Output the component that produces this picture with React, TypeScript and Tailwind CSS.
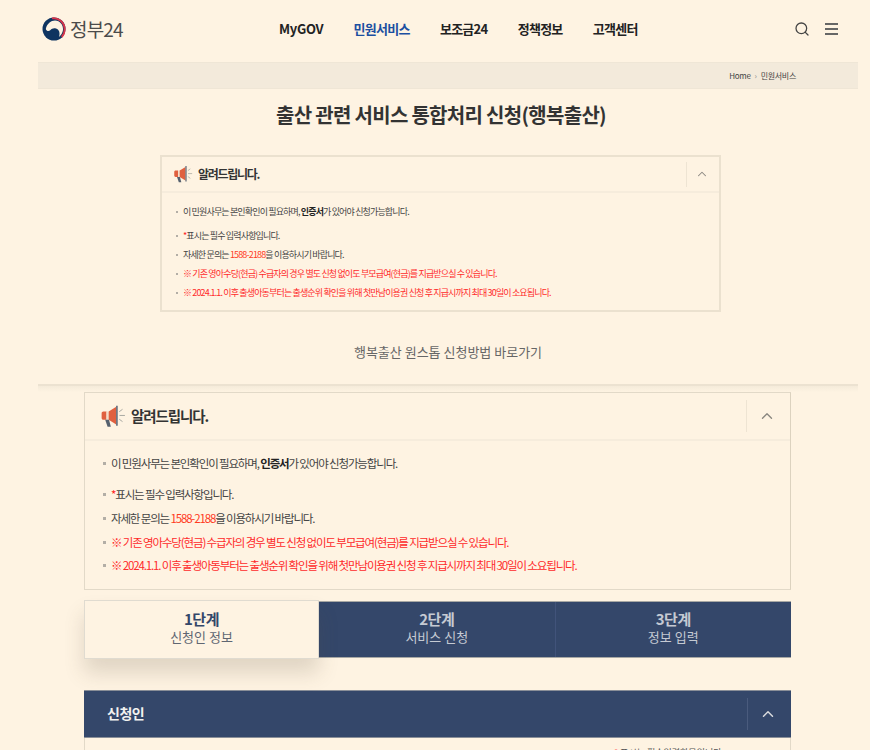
import { ChevronUp, Search } from "lucide-react";

function Megaphone({ size }: { size: number }) {
  return (
    <svg width={size} height={size} viewBox="0 0 24 24" className="shrink-0">
      <path d="M1.500 9.500c0-1 .7-1.700 1.600-1.700H6v7.700H3.100c-.9 0-1.600-.7-1.600-1.700z" fill="#e0603f" />
      <path d="M6 7.800h2v7.700H6z" fill="#f3ddc8" />
      <path d="M8 7.800l7-4.300v16.300l-7-4.300z" fill="#e0603f" />
      <path d="M14.800 2.500h1.600v18.500h-1.600z" fill="#6b7480" />
      <path d="M4.800 15.500h3.500l1.700 6.500H7z" fill="#55606e" />
      <path d="M18 11.500h5M17.800 8l3-2.200M17.800 15l3 2.200" stroke="#a8a8a0" strokeWidth="0.9" fill="none" />
    </svg>
  );
}

function Logo() {
  return (
    <svg width="24" height="24" viewBox="0 0 24 24">
      <circle cx="12" cy="12" r="11.500" fill="#0f3460" />
      <path d="M3.800 12C5 6.500 9 3.500 13 3.500c5 0 8.500 4.500 8 9.500-.4 3-2 5.200-4 7 1.200-3.500.5-7.500-3-8.500-2.500-.8-4.300.2-5.500 1.500-1.500 1.500-3.800 1.500-4.700-1z" fill="#fef3e2" />
      <path d="M10 1.400c6-1 12 3.500 12.600 10.200.3 3.200-.8 6.200-2.800 8.400" stroke="#d8344a" strokeWidth="1.900" fill="none" />
    </svg>
  );
}

type NoticeProps = {
  large?: boolean;
};

function Notice({ large }: NoticeProps) {
  const rowClass = large
    ? "flex items-center gap-[5px] h-[23.700px]"
    : "flex items-center gap-[5px] h-[19px]";
  const dot = large ? "w-[3px] h-[3px] bg-[#b3aea6] shrink-0" : "w-[2px] h-[2px] bg-[#b3aea6] shrink-0";
  return (
    <section className={large ? "border border-[#e2d9c8] border-r-[#dcd2bf]" : "border-2 border-[#ebe1cf]"}>
      <div className={large ? "flex items-center h-[48px] pl-[15px] pb-[1px] border-b-2 border-[#f6ecdc]" : "flex items-center h-[36px] pl-[11px] border-b-2 border-[#f6ecdc]"}>
        <Megaphone size={large ? 26 : 20} />
        <h3 className={large ? "ml-[5px] text-[14.500px] font-bold tracking-[-1.1px] text-[#333]" : "ml-[5px] text-[12px] font-bold tracking-[-1.3px] text-[#333]"}>
          알려드립니다.
        </h3>
        <div className={large ? "ml-auto h-[32px] w-[44px] pr-[4px] border-l border-[#eee4d3] flex items-center justify-center" : "ml-auto h-[25px] w-[33px] pr-[2px] border-l border-[#eee4d3] flex items-center justify-center"}>
          <ChevronUp size={large ? 18 : 14} strokeWidth={1.8} className="text-[#8a8780]" />
        </div>
      </div>
      <div className={large ? "pl-[18px] pt-[11px] pb-[11px] text-[11.500px] tracking-[-1.15px] text-[#444]" : "pl-[14px] pt-[9px] pb-[8px] text-[9px] tracking-[-0.85px] text-[#444]"}>
        <p className={large ? rowClass + " mb-[7.300px]" : rowClass + " mb-[5px]"}>
          <i className={dot} />
          <span>
            이 민원사무는 본인확인이 필요하며, <b className="font-bold text-[#222]">인증서</b>가 있어야 신청가능합니다.
          </span>
        </p>
        <p className={rowClass}>
          <i className={dot} />
          <span>
            <span className="text-[#ff2020]">*</span>표시는 필수 입력사항입니다.
          </span>
        </p>
        <p className={rowClass}>
          <i className={dot} />
          <span>
            자세한 문의는 <span className="text-[#ff3b1f]">1588-2188</span>을 이용하시기 바랍니다.
          </span>
        </p>
        <p className={rowClass + " text-[#ff2a2a]"}>
          <i className={dot} />
          <span>※ 기존 영아수당(현금) 수급자의 경우 별도 신청 없이도 부모급여(현금)를 지급받으실 수 있습니다.</span>
        </p>
        <p className={rowClass + " text-[#ff2a2a]"}>
          <i className={dot} />
          <span>※ 2024.1.1. 이후 출생아동부터는 출생순위 확인을 위해 첫만남이용권 신청 후 지급시까지 최대 30일이 소요됩니다.</span>
        </p>
      </div>
    </section>
  );
}

function Step({ no, label, active }: { no: string; label: string; active?: boolean }) {
  if (active) {
    return (
      <div className="relative z-10 w-[235px] h-[59px] -mt-[2px] pb-[4px] bg-[#fef3e2] border border-[#e0dbd0] flex flex-col items-center justify-center shadow-[0_14px_20px_rgba(90,80,60,0.18)]">
        <strong className="text-[15px] leading-[20px] font-bold tracking-[-0.5px] text-[#34476a]">{no}</strong>
        <span className="text-[13px] leading-[16px] text-[#5f6672]">{label}</span>
      </div>
    );
  }
  return (
    <div className="flex-1 h-[56px] pb-[5px] flex flex-col items-center justify-center text-[#c5cad3]">
      <strong className="text-[15px] leading-[20px] font-bold tracking-[-0.5px]">{no}</strong>
      <span className="text-[13px] leading-[16px]">{label}</span>
    </div>
  );
}

export default function App() {
  return (
    <div className="w-[870px] h-[750px] overflow-hidden bg-[#fef3e2] font-['Noto_Sans_CJK_KR','Noto_Sans',sans-serif]">
      <header className="h-[62px] pb-[4px] flex items-center pl-[42px] pr-[32px]">
        <a className="flex items-center gap-[4px] w-[237px]">
          <Logo />
          <span className="text-[19px] font-normal tracking-[-0.8px] text-[#4b4b4b]">정부24</span>
        </a>
        <nav className="flex gap-[30.300px] text-[13px] font-bold tracking-[-0.75px] text-[#222]">
          <a className="tracking-[-0.3px]">MyGOV</a>
          <a className="text-[#1c4fa1]">민원서비스</a>
          <a>보조금24</a>
          <a>정책정보</a>
          <a>고객센터</a>
        </nav>
        <div className="ml-auto flex items-center gap-[15px] text-[#444]">
          <Search size={16} strokeWidth={1.9} />
          <div className="w-[13px] flex flex-col gap-[3px]">
            <i className="block h-[2px] bg-[#666]" />
            <i className="block h-[2px] bg-[#666]" />
            <i className="block h-[2px] bg-[#666]" />
          </div>
        </div>
      </header>

      <div className="ml-[38px] w-[820px]">
        <div className="h-[27px] bg-[#f3eadb] border-y border-[#efe6d6] flex items-center justify-end pr-[62px] gap-[4px] text-[8px] tracking-[-0.3px] text-[#444]">
          <span>Home</span>
          <span className="text-[#888]">›</span>
          <span>민원서비스</span>
        </div>

        <h2 className="mt-[11px] pr-[14px] text-center text-[20px] leading-[30px] font-bold tracking-[-0.7px] text-[#333]">
          출산 관련 서비스 통합처리 신청(행복출산)
        </h2>

        <div className="mt-[25px] ml-[122px] w-[561px]">
          <Notice />
        </div>

        <p className="mt-[29px] text-center text-[13px] leading-[22px] text-[#666]">
          행복출산 원스톱 신청방법 바로가기
        </p>

        <div className="mt-[21px] h-[8px] border-t-2 border-[#ece2d1] bg-gradient-to-b from-[#f5ebda] to-[#fef3e2]" />

        <div className="pl-[46px] w-[753px]">
          <Notice large />

          <div className="mt-[11px] flex bg-[#34476a] border-y border-[#a8a8a4] h-[57px] items-start">
            <Step no="1단계" label="신청인 정보" active />
            <Step no="2단계" label="서비스 신청" />
            <div className="w-px h-full bg-[#41537a]" />
            <Step no="3단계" label="정보 입력" />
          </div>

          <div className="mt-[32px] h-[48px] bg-[#34476a] border-y border-[#8a8f98] flex items-center pl-[23px]">
            <h3 className="text-[14px] font-bold tracking-[-0.5px] text-[#f2f2f0]">신청인</h3>
            <div className="ml-auto w-[44px] h-[32px] pr-[4px] border-l border-[#4a5b7d] flex items-center justify-center">
              <ChevronUp size={18} strokeWidth={2} className="text-[#d8dadd]" />
            </div>
          </div>

          <div className="border-x border-[#e2d9c8] h-[30px] pt-[9px] pr-[66px] flex justify-end text-[9px] leading-[12px] text-[#555]">
            <span>
              <span className="text-[#ff2020]">*</span> 표시는 필수입력항목입니다.
            </span>
          </div>
        </div>
      </div>
    </div>
  );
}
